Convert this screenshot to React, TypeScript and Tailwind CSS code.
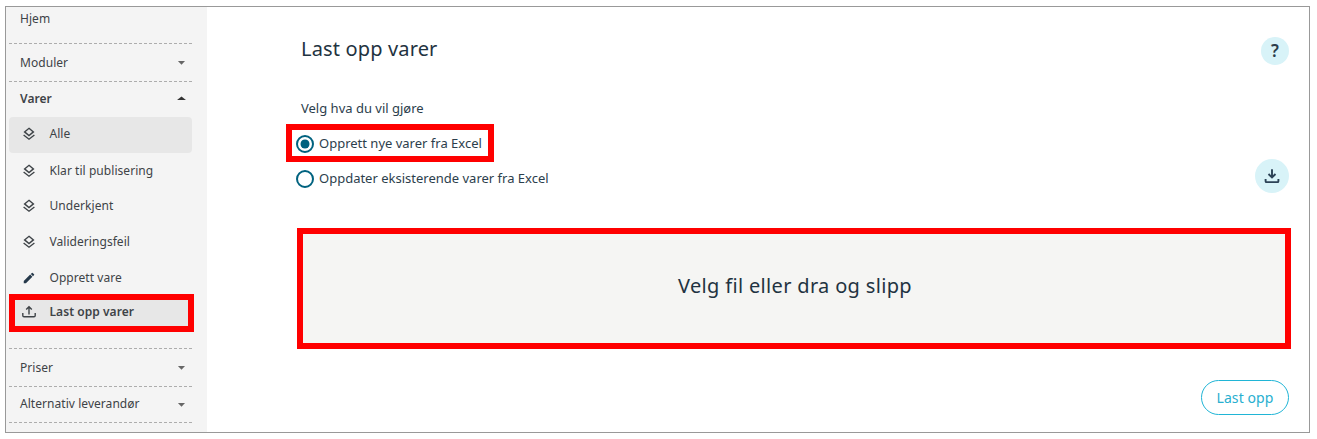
import React from 'react';
import clsx from 'clsx';
import { MdEdit, MdArrowDropDown, MdArrowDropUp } from 'react-icons/md';

function LayersIcon() {
  return (
    <svg className="w-3.5 h-3.5" viewBox="0 0 14 14" fill="none" stroke="currentColor" strokeWidth="1.4">
      <path d="M7 1.3 11.4 4.9 7 8.5 2.6 4.9Z" />
      <path d="M1.6 8 7 12.2 12.4 8" />
    </svg>
  );
}

function UploadIcon() {
  return (
    <svg className="w-3.5 h-3.5" viewBox="0 0 14 14" fill="none" stroke="currentColor" strokeWidth="1.4">
      <path d="M7 9.5V2M4.2 4.6 7 1.8l2.8 2.8" />
      <path d="M.8 8v2.6c0 .8.4 1.2 1.2 1.2h10c.8 0 1.2-.4 1.2-1.2V8" />
    </svg>
  );
}

function DownloadIcon() {
  return (
    <svg className="w-4 h-4" viewBox="0 0 16 16" fill="none" stroke="currentColor" strokeWidth="1.9">
      <path d="M8 1.3v7.8M4.5 6 8 9.5 11.5 6" />
      <path d="M1.6 11v2.2c0 .6.3.9.9.9h11c.6 0 .9-.3.9-.9V11" />
    </svg>
  );
}

const varerItems = [
  { name: 'Alle', icon: LayersIcon, style: 'h-9 pb-0.5 rounded bg-[#e7e7e7]' },
  { name: 'Klar til publisering', icon: LayersIcon, style: 'h-9 pb-px' },
  { name: 'Underkjent', icon: LayersIcon, style: 'h-[35px] pb-px' },
  { name: 'Valideringsfeil', icon: LayersIcon, style: 'h-9' },
  { name: 'Opprett vare', icon: MdEdit, style: 'h-[35px]' },
];

function Divider() {
  return (
    <div className="h-px bg-[repeating-linear-gradient(90deg,#adadad_0_3px,transparent_3px_5px)]" />
  );
}

interface SectionProps {
  name: string;
  open?: boolean;
  className: string;
}

function Section({ name, open, className }: SectionProps) {
  const Arrow = open ? MdArrowDropUp : MdArrowDropDown;
  return (
    <button className={clsx('flex w-full items-center justify-between pl-[11px] pr-0.5', className)}>
      <span className={open ? 'font-semibold' : ''}>{name}</span>
      <Arrow className={clsx('h-[17px] w-[17px]', open ? 'scale-x-125 text-[#333]' : 'text-[#666]')} />
    </button>
  );
}

function Sidebar() {
  return (
    <nav className="w-[201px] shrink-0 bg-[#f4f4f4] pl-[3px] pr-[15px] text-[12px] tracking-[0.05px] text-[#3e4347]">
      <div className="flex h-9 items-center pb-3 pl-[11px]">Hjem</div>
      <Divider />
      <Section name="Moduler" className="h-[37px]" />
      <Divider />
      <Section name="Varer" open className="h-[35px] pb-0.5" />
      <ul>
        {varerItems.map(({ name, icon: Icon, style }) => (
          <li key={name} className={clsx('flex items-center gap-[14px] pl-[12.5px]', style)}>
            <Icon className="h-3.5 w-3.5 text-[#25384a]" />
            <span>{name}</span>
          </li>
        ))}
      </ul>
      <div className="-mr-0.5 -mt-px flex h-[38px] items-center gap-[14px] border-6 border-[#ff0000] bg-[#e7e7e7] pb-0.5 pl-[6.5px] font-semibold">
        <UploadIcon />
        <span>Last opp varer</span>
      </div>
      <div className="h-4" />
      <Divider />
      <Section name="Priser" className="h-[37px]" />
      <Divider />
      <Section name="Alternativ leverandør" className="h-[35px] pb-px" />
      <Divider />
    </nav>
  );
}

function Radio({ checked }: { checked?: boolean }) {
  return (
    <span className="flex h-[18px] w-[18px] items-center justify-center rounded-full border-2 border-[#00627f] bg-white">
      {checked && <span className="h-2 w-2 rounded-full bg-[#00627f] ring-[0.5px] ring-[#00627f]" />}
    </span>
  );
}

export default function App() {
  return (
    <div className="h-[439px] bg-white pl-[5px] pt-1.5 font-['Noto_Sans',sans-serif]">
      <div className="flex h-[427px] w-[1305px] overflow-hidden border border-[#999]">
        <Sidebar />
        <main className="flex-1 pl-[79px] pr-[18px] text-[13px] text-[#2c3e4c]">
          <header className="flex h-[87px] items-center justify-between pl-[15px] pr-[2px]">
            <h1 className="pb-[3px] text-[20px] tracking-[0.15px] text-[#1f3341]">Last opp varer</h1>
            <button className="flex h-7 w-7 items-center justify-center rounded-full bg-[#d8f3f8] text-[17px] font-semibold">
              ?
            </button>
          </header>
          <div className="flex h-[134px] items-start justify-between pr-[2px]">
            <div>
              <p className="h-[30px] pl-[15px] leading-7">Velg hva du vil gjøre</p>
              <label className="flex h-[38px] w-[208px] items-center gap-[5px] whitespace-nowrap border-6 border-[#ff0000] pl-1 pt-px">
                <Radio checked />
                <span>Opprett nye varer fra Excel</span>
              </label>
              <label className="flex h-[34px] items-center gap-[5px] pl-2.5">
                <Radio />
                <span>Oppdater eksisterende varer fra Excel</span>
              </label>
            </div>
            <button className="mt-[65px] flex h-[34px] w-[34px] items-center justify-center rounded-full bg-[#d8f3f8] text-[#2b4256]">
              <DownloadIcon />
            </button>
          </div>
          <div className="ml-[11px] flex h-[121px] items-center justify-center border-6 border-[#ff0000] bg-[#f5f5f3] pb-[5px] pl-0.5 text-[20px] tracking-[0.33px] text-[#1f3341]">
            <span>Velg fil eller dra og slipp</span>
          </div>
          <div className="flex justify-end pr-[2px] pt-[31px]">
            <button className="h-[35px] w-[88px] rounded-full border border-[#20b5d6] pb-px text-[14px] tracking-[0.1px] text-[#28afd0]">
              Last opp
            </button>
          </div>
        </main>
      </div>
    </div>
  );
}
